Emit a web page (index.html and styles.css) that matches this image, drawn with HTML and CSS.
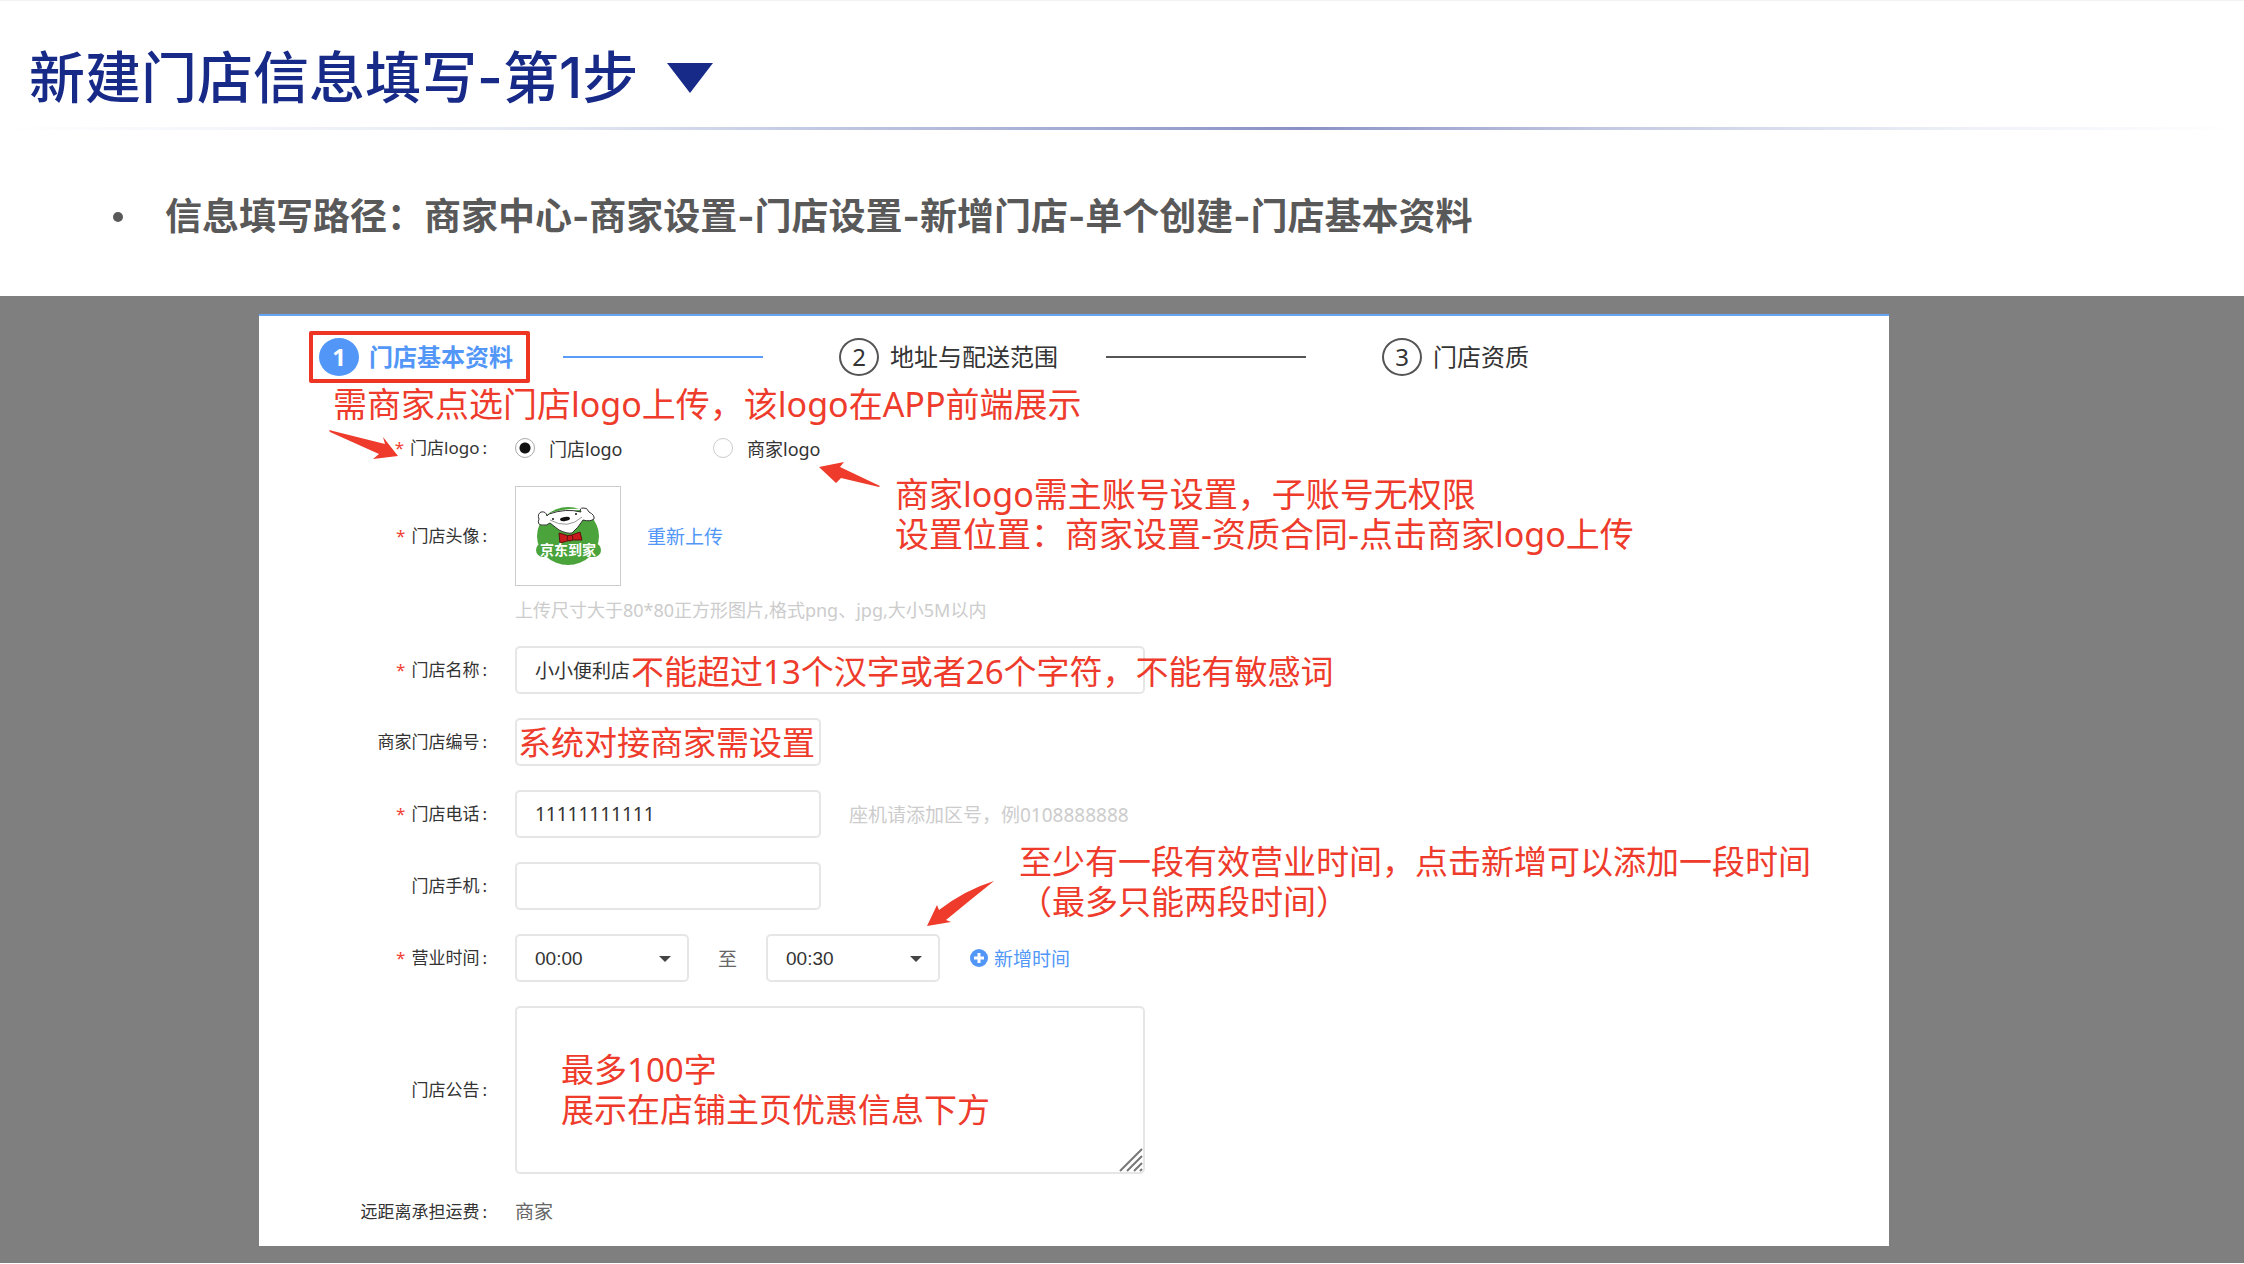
FILE: index.html
```
<!DOCTYPE html>
<html lang="zh-CN">
<head>
    <meta charset="utf-8">
    <title>新建门店信息填写</title>
    <link rel="stylesheet" href="styles.css">
</head>
<body>
<header class="head">
    <h1>新建门店信息填写-第1步</h1>
    <svg class="head-mark" viewBox="0 0 46 30"><path d="M0 0H46L23 30Z"/></svg>
</header>
<ul class="path">
    <li>信息填写路径：商家中心-商家设置-门店设置-新增门店-单个创建-门店基本资料</li>
</ul>
<main class="stage">
<form class="card">
    <ol class="steps">
        <li class="step active"><span class="num">1</span>门店基本资料</li>
        <li class="line blue"></li>
        <li class="step"><span class="num">2</span>地址与配送范围</li>
        <li class="line"></li>
        <li class="step"><span class="num">3</span>门店资质</li>
    </ol>

    <div class="row row-logo">
        <span class="label"><i>*</i>门店logo<b>:</b></span>
        <label class="radio"><input type="radio" name="logo" checked>门店logo</label>
        <label class="radio"><input type="radio" name="logo">商家logo</label>
        <p class="note big note-logo">需商家点选门店logo上传，该logo在APP前端展示</p>
        <svg class="arrow arrow-logo" viewBox="0 0 70 30"><path d="M0 0L56 14L54 7L69 26L44 29L50 24L1 2Z"/></svg>
        <svg class="arrow arrow-shop" viewBox="0 0 62 26"><path d="M0 5L25 0L21 5L61 24L60 25L22 16L17 21Z"/></svg>
        <p class="note big note-shop">商家logo需主账号设置，子账号无权限<br>设置位置：商家设置-资质合同-点击商家logo上传</p>
    </div>

    <div class="row row-avatar">
        <span class="label"><i>*</i>门店头像<b>:</b></span>
        <div class="avatar">
            <svg viewBox="0 0 104 98">
                <ellipse cx="52" cy="49" rx="31" ry="29" fill="#4aa43b"/>
                <rect x="20" y="56" width="65" height="14" rx="7" fill="#4aa43b"/>
                <path d="M31 27Q50 21 65 22Q65 17 70 22Q69 20 71 22Z" fill="#fff"/>
                <path d="M33 27Q50 21 65 25Q63 21 67 21Q71 20 73 25Q79 28 78 32Q74 35 67 33Q62 41 56 46Q51 47 43 43L34 36Q31 39 25 38Q21 37 23 32Q21 27 25 25Q30 24 31 29Z" fill="#fff" stroke="#333" stroke-width="1"/>
                <path d="M34 33Q52 43 66 30" fill="none" stroke="#999" stroke-width="1"/>
                <ellipse cx="49" cy="32" rx="5" ry="2" transform="rotate(-8 49 32)" fill="#111"/>
                <circle cx="37" cy="32" r="1" fill="#111"/>
                <circle cx="60" cy="27" r="1" fill="#111"/>
                <path d="M43 46L53 49L64 45L66 53L55 53L44 56Z" fill="#c8191c" stroke="#5c1210" stroke-width="1"/>
                <circle cx="54" cy="51" r="3" fill="#c8191c" stroke="#5c1210" stroke-width="1"/>
                <text x="52" y="68" text-anchor="middle">京东到家</text>
            </svg>
        </div>
        <a class="link" href="#">重新上传</a>
    </div>
    <p class="hint hint-avatar">上传尺寸大于80*80正方形图片,格式png、jpg,大小5M以内</p>

    <div class="row">
        <label class="label" for="name"><i>*</i>门店名称<b>:</b></label>
        <input class="input wide" id="name" type="text" value="小小便利店">
        <p class="note note-name">不能超过13个汉字或者26个字符，不能有敏感词</p>
    </div>
    <div class="row">
        <label class="label" for="code">商家门店编号<b>:</b></label>
        <input class="input" id="code" type="text">
        <p class="note note-code">系统对接商家需设置</p>
    </div>
    <div class="row">
        <label class="label" for="tel"><i>*</i>门店电话<b>:</b></label>
        <input class="input" id="tel" type="text" value="11111111111">
        <span class="hint hint-tel">座机请添加区号，例0108888888</span>
    </div>
    <div class="row">
        <label class="label" for="mobile">门店手机<b>:</b></label>
        <input class="input" id="mobile" type="text">
    </div>
    <div class="row">
        <label class="label" for="from"><i>*</i>营业时间<b>:</b></label>
        <span class="select"><select id="from"><option>00:00</option></select></span>
        <label class="to" for="until">至</label>
        <span class="select"><select id="until"><option>00:30</option></select></span>
        <button class="add" type="button">
            <svg viewBox="0 0 18 18"><circle cx="9" cy="9" r="9"/><path d="M9 4V14M4 9H14"/></svg>新增时间
        </button>
        <svg class="arrow arrow-time" viewBox="0 0 68 46"><path d="M0 45L10 24L12 29Q38 9 67 0Q42 20 19 39L24 41Z"/></svg>
        <p class="note note-time">至少有一段有效营业时间，点击新增可以添加一段时间<br>（最多只能两段时间）</p>
    </div>
    <div class="row">
        <label class="label" for="notice">门店公告<b>:</b></label>
        <div class="area">
            <textarea id="notice"></textarea>
            <svg class="grip" viewBox="0 0 24 24"><path d="M1 23L23 1M8 23L23 8M15 23L23 15M21 23L23 21"/></svg>
            <p class="note note-area">最多100字<br>展示在店铺主页优惠信息下方</p>
        </div>
    </div>
    <div class="row row-fee">
        <span class="label">远距离承担运费<b>:</b></span>
        <span class="fee">商家</span>
    </div>
</form>
</main>
</body>
</html>
```
FILE: styles.css
```
* { box-sizing: border-box; }
body {
    margin: 0;
    border-top: 1px solid #f2f2f2;
    background: #fff;
    color: #333;
    font-family: "Noto Sans", "Noto Sans CJK SC", sans-serif;
    font-size: 19px;
}
p, ul, ol, h1 { margin: 0; padding: 0; }
ol { list-style: none; }
input, select, textarea, button { font: inherit; color: inherit; }

.head {
    display: flex;
    align-items: center;
    gap: 29px;
    height: 126px;
    padding: 28px 0 0 29px;
    position: relative;
}
.head::after {
    content: "";
    position: absolute;
    left: 0;
    right: 0;
    bottom: -3px;
    height: 3px;
    background: linear-gradient(90deg, #fff, #e3e7f2 25%, #c5cce6 35%, #8a91c4 58%, #c5cae4 72%, #f0f2f8 88%, #fff);
}
h1 {
    color: #172a88;
    font: 500 56px/60px Inter, "Noto Sans CJK SC", sans-serif;
}
.head-mark { width: 46px; height: 30px; fill: #172a88; }

.path {
    list-style: none;
    padding: 59px 0 48px 113px;
    color: #595959;
    font: 700 37px/62px Inter, "Noto Sans CJK SC", sans-serif;
}
.path li { display: flex; align-items: center; gap: 42px; }
.path li::before {
    content: "";
    width: 10px;
    height: 10px;
    border-radius: 50%;
    background: #595959;
}

.stage { padding: 18px 355px 17px 259px; background: #7f7f7f; }
.card { border-top: 2px solid #67a5f5; background: #fff; padding-bottom: 20px; }

.steps {
    display: flex;
    align-items: center;
    padding: 15px 0 0 50px;
    font-size: 24px;
    line-height: 36px;
}
.step { display: flex; align-items: center; gap: 11px; }
.num {
    width: 40px;
    height: 38px;
    border: 2px solid #555;
    border-radius: 50%;
    line-height: 34px;
    text-align: center;
}
.active {
    height: 52px;
    padding: 0 13px 0 6px;
    gap: 10px;
    border: 4px solid #ee3524;
    border-radius: 2px;
    color: #5297f8;
    font-weight: 700;
}
.active .num { border-color: #5297f8; background: #5297f8; color: #fff; }
.line { width: 200px; height: 2px; margin: 0 76px 0 48px; background: #555; }
.line.blue { margin-left: 33px; background: #5b9cf8; }

.row { display: flex; align-items: center; position: relative; margin-bottom: 24px; }
.label {
    width: 228px;
    margin-right: 28px;
    font-size: 17px;
    line-height: 24px;
    text-align: right;
}
.label i { margin-right: 6px; color: #f04134; font-style: normal; }
.label b { margin-left: 3px; font-weight: 400; }

.row-logo { height: 28px; margin: 51px 0 24px; }
.radio { display: flex; align-items: center; width: 198px; font-size: 18px; }
.radio input {
    appearance: none;
    width: 20px;
    height: 20px;
    margin: 0 14px 0 0;
    border: 1px solid #ccc;
    border-radius: 50%;
}
.radio input:checked {
    border-color: #aaa;
    background: radial-gradient(circle, #111 5px, transparent 6px);
}

.row-avatar { margin-bottom: 10px; }
.avatar { width: 106px; height: 100px; border: 1px solid #ccc; }
.avatar svg { display: block; width: 104px; height: 98px; }
.avatar text { fill: #fff; font: 700 14px "Noto Sans CJK SC", sans-serif; }
.link { margin-left: 26px; color: #5297f8; text-decoration: none; }
.hint { color: #ccc; }
.hint-avatar { margin: 0 0 22px 256px; font-size: 18px; line-height: 28px; }
.hint-tel { margin-left: 28px; }

.input, .select select, textarea {
    border: 2px solid #e6e6e6;
    border-radius: 5px;
    background: #fff;
    outline: 0;
}
.input { width: 306px; height: 48px; padding: 0 18px; }
.input.wide { width: 630px; }
.select { position: relative; }
.select select {
    display: block;
    appearance: none;
    width: 174px;
    height: 48px;
    padding: 0 18px;
    font-family: "Liberation Sans", sans-serif;
}
.select::after {
    content: "";
    position: absolute;
    top: 22px;
    right: 18px;
    border: 6px solid transparent;
    border-top-color: #444;
    border-bottom: 0;
}
.to { width: 77px; color: #666; text-align: center; }
.add {
    display: flex;
    align-items: center;
    gap: 6px;
    margin-left: 30px;
    padding: 0;
    border: 0;
    background: none;
    color: #5297f8;
}
.add svg { width: 18px; height: 18px; fill: #5297f8; }
.add path { stroke: #fff; stroke-width: 3; }

.area { position: relative; }
textarea { display: block; width: 630px; height: 168px; resize: none; }
.grip {
    position: absolute;
    right: 2px;
    bottom: 2px;
    width: 24px;
    height: 24px;
    stroke: #777;
    stroke-width: 2;
}
.row-fee { margin: 0; line-height: 28px; }
.fee { color: #666; }

/* red remarks drawn over the form */
.note {
    position: absolute;
    color: #ee3b2b;
    font-size: 33px;
    line-height: 40px;
    white-space: nowrap;
}
.note.big { font-size: 34px; }
.arrow { position: absolute; fill: #ee3b2b; }
.note-logo { left: 74px; top: -50px; }
.arrow-logo { left: 70px; top: -4px; width: 70px; height: 30px; }
.arrow-shop { left: 560px; top: 28px; width: 62px; height: 26px; }
.note-shop { left: 636px; top: 40px; }
.note-name { left: 372px; top: 6px; }
.note-code { left: 259px; top: 5px; }
.arrow-time { left: 668px; top: -53px; width: 68px; height: 46px; }
.note-time { left: 760px; top: -92px; }
.note-area { left: 46px; top: 44px; }
```
